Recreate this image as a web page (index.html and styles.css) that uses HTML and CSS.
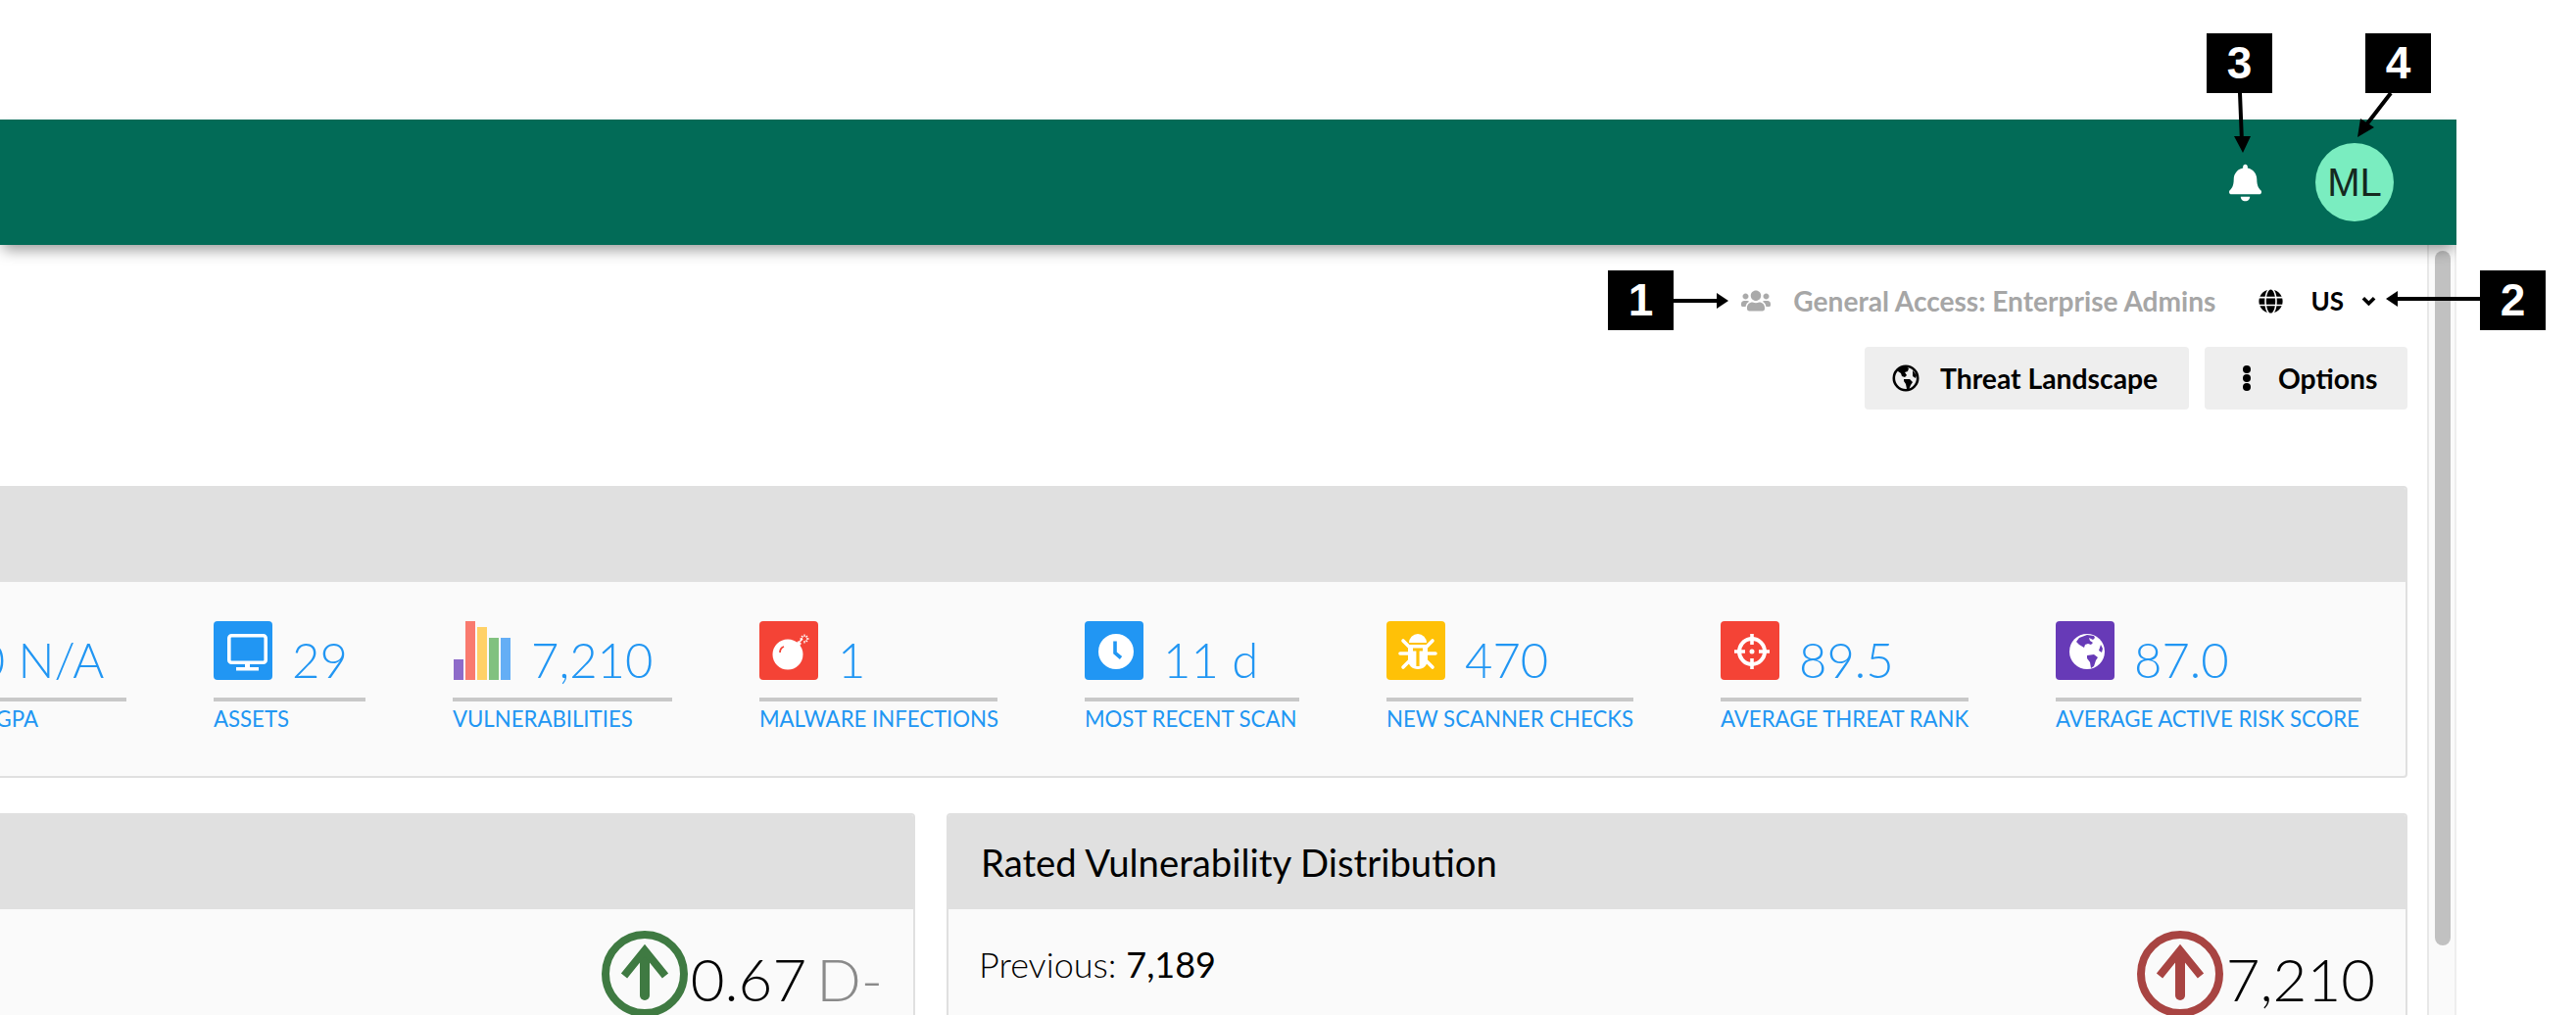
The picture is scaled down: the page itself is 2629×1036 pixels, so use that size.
FILE: index.html
```html
<!DOCTYPE html>
<html lang="en">
<head>
<meta charset="utf-8">
<title>Dashboard</title>
<link rel="stylesheet" href="styles.css">
</head>
<body>
<div class="app">
  <div class="topspace"></div>
  <header class="bar">
    <svg class="bell" viewBox="0 0 448 512"><path fill="#fff" d="M224 512c35.32 0 63.97-28.65 63.97-64H160.03c0 35.35 28.65 64 63.97 64zm215.39-149.71c-19.32-20.76-55.47-51.99-55.47-154.29 0-77.7-54.48-139.9-127.94-155.16V32c0-17.67-14.32-32-31.98-32s-31.98 14.33-31.98 32v20.84C118.56 68.1 64.08 130.3 64.08 208c0 102.3-36.15 133.53-55.47 154.29-6 6.45-8.66 14.16-8.61 21.71.11 16.4 12.98 32 32.1 32h383.8c19.12 0 32-15.6 32.1-32 .05-7.55-2.61-15.27-8.61-21.71z"/></svg>
    <div class="avatar">ML</div>
  </header>
  <div class="main">
    <div class="content">
      <div class="access">
        <svg class="users" viewBox="0 0 640 512"><path fill="#aaa" d="M96 224c35.3 0 64-28.7 64-64s-28.7-64-64-64-64 28.7-64 64 28.7 64 64 64zm448 0c35.3 0 64-28.7 64-64s-28.7-64-64-64-64 28.7-64 64 28.7 64 64 64zm32 32h-64c-17.6 0-33.5 7.1-45.1 18.6 40.3 22.1 68.9 62 75.1 109.4h66c17.7 0 32-14.3 32-32v-32c0-35.3-28.7-64-64-64zm-256 0c61.9 0 112-50.1 112-112S381.9 32 320 32 208 82.1 208 144s50.1 112 112 112zm76.8 32h-8.3c-20.8 10-43.9 16-68.5 16s-47.6-6-68.5-16h-8.3C179.6 288 128 339.6 128 403.2V432c0 26.5 21.5 48 48 48h288c26.5 0 48-21.5 48-48v-28.8c0-63.6-51.6-115.2-115.2-115.2zm-223.7-13.4C161.5 263.1 145.6 256 128 256H64c-35.3 0-64 28.7-64 64v32c0 17.7 14.3 32 32 32h65.9c6.3-47.4 34.9-87.3 75.2-109.4z"/></svg>
        <span class="access-text">General Access: Enterprise Admins</span>
        <svg class="globe" viewBox="0 0 496 512"><path d="M336.5 160C322 70.7 287.8 8 248 8s-74 62.7-88.5 152h177zM152 256c0 22.2 1.2 43.5 3.3 64h185.3c2.1-20.5 3.3-41.8 3.3-64s-1.2-43.5-3.3-64H155.3c-2.1 20.5-3.3 41.8-3.3 64zm324.7-96c-28.6-67.9-86.5-120.4-158-141.6 24.4 33.8 41.2 84.7 50 141.6h108zM177.2 18.4C105.8 39.6 47.8 92.1 19.3 160h108c8.7-56.9 25.5-107.8 49.9-141.6zM487.4 192H372.7c2.1 21 3.3 42.5 3.3 64s-1.2 43-3.3 64h114.6c5.5-20.5 8.6-41.8 8.6-64s-3.1-43.5-8.5-64zM120 256c0-21.5 1.2-43 3.3-64H8.6C3.2 212.5 0 233.8 0 256s3.2 43.5 8.6 64h114.6c-2-21-3.2-42.5-3.2-64zm39.5 96c14.5 89.3 48.7 152 88.5 152s74-62.7 88.5-152h-177zm159.3 141.6c71.4-21.2 129.4-73.7 158-141.6h-108c-8.8 56.9-25.6 107.8-50 141.6zM19.3 352c28.6 67.9 86.5 120.4 158 141.6-24.4-33.8-41.2-84.7-50-141.6h-108z"/></svg>
        <span class="region">US</span>
        <svg class="chev" viewBox="0 0 16 10"><path d="M2 2l6 6 6-6" fill="none" stroke="#000" stroke-width="3.8"/></svg>
      </div>
      <div class="actions">
        <button class="btn btn-threat">
          <svg class="btn-earth" viewBox="0 0 28 28"><circle cx="14" cy="14" r="12.2" fill="#eee" stroke="#000" stroke-width="2.6"/><path d="M8 3l6-1 3 2-1 3-3 1 2 3-2 2-3-1-1-3-3-2-1-1zM12 15l6 0 3 3-2 3-2 5-2-1-1-5-2-3zM21 6l4 5-1 3-3-2z"/></svg>
          <span>Threat Landscape</span>
        </button>
        <button class="btn btn-options">
          <svg class="dots" viewBox="0 0 10 26"><circle cx="5" cy="4" r="4"/><circle cx="5" cy="13" r="4"/><circle cx="5" cy="22" r="4"/></svg>
          <span>Options</span>
        </button>
      </div>
      <section class="panel">
        <div class="panel-head"></div>
        <div class="stats">
          <div class="stat stat-gpa">
            <div class="stat-top">
              <div class="ico ico-green"></div>
              <span class="num">0.0 N/A</span>
            </div>
            <div class="stat-label">ENTERPRISE GPA</div>
          </div>
          <div class="stat stat-assets">
            <div class="stat-top">
              <svg class="ico ico-blue" viewBox="0 0 60 60"><rect x="15.8" y="14.8" width="37.4" height="27.4" rx="2.5" fill="none" stroke="#fff" stroke-width="3.6"/><path fill="#fff" d="M32 44h5v3h9v3.5H23V47h9z"/></svg>
              <span class="num">29</span>
            </div>
            <div class="stat-label">ASSETS</div>
          </div>
          <div class="stat stat-vuln">
            <div class="stat-top">
              <div class="bars">
                <i class="b b1"></i><i class="b b2"></i><i class="b b3"></i><i class="b b4"></i><i class="b b5"></i>
              </div>
              <span class="num">7,210</span>
            </div>
            <div class="stat-label">VULNERABILITIES</div>
          </div>
          <div class="stat stat-malware">
            <div class="stat-top">
              <svg class="ico ico-red" viewBox="0 0 60 60"><circle cx="29" cy="34" r="15.5" fill="#fff"/><path d="M37 23l3-3 3 3-3 3z" fill="#fff"/><path d="M41 21l3-3" stroke="#fff" stroke-width="1.6"/><path d="M46 13.500v2.500M46 20v2.500M41.500 18h2.500M48 18h2.500M43 15l1.500 1.500M49 15l-1.500 1.500M49 21l-1.500-1.500" stroke="#fff" stroke-width="1.3"/><path d="M21 32c0-3 1.500-5 4-6" fill="none" stroke="#f44336" stroke-width="1.800"/></svg>
              <span class="num">1</span>
            </div>
            <div class="stat-label">MALWARE INFECTIONS</div>
          </div>
          <div class="stat stat-scan">
            <div class="stat-top">
              <svg class="ico ico-blue" viewBox="0 0 60 60"><circle cx="32" cy="31" r="18" fill="#fff"/><path d="M31 20.500V32.500l6 5" fill="none" stroke="#2196f3" stroke-width="3.600"/></svg>
              <span class="num">11 d</span>
            </div>
            <div class="stat-label">MOST RECENT SCAN</div>
          </div>
          <div class="stat stat-checks">
            <div class="stat-top">
              <svg class="ico ico-amber" viewBox="0 0 60 60"><path fill="#fff" d="M23 22a9 9 0 0 1 18 0z"/><path fill="#fff" d="M22 24h20v15c0 6-4 10-10 10s-10-4-10-10z"/><path d="M32 28v18M27 29h10" stroke="#ffc107" stroke-width="3.200" fill="none"/><path d="M17 20l6 6M47 20l-6 6M14 33h9M50 33h-9M17 47l6-6M47 47l-6-6" stroke="#fff" stroke-width="3.600" stroke-linecap="round"/></svg>
              <span class="num">470</span>
            </div>
            <div class="stat-label">NEW SCANNER CHECKS</div>
          </div>
          <div class="stat stat-rank">
            <div class="stat-top">
              <svg class="ico ico-red" viewBox="0 0 60 60"><circle cx="32" cy="31" r="13" fill="none" stroke="#fff" stroke-width="4"/><circle cx="32" cy="31" r="2.500" fill="#fff"/><path d="M32 13v11M32 38v11M14 31h11M39 31h11" stroke="#fff" stroke-width="3.600"/></svg>
              <span class="num">89.5</span>
            </div>
            <div class="stat-label">AVERAGE THREAT RANK</div>
          </div>
          <div class="stat stat-risk">
            <div class="stat-top">
              <svg class="ico ico-purple" viewBox="0 0 60 60"><circle cx="32" cy="31" r="18" fill="#fff"/><path fill="#673ab7" d="M24 17l8-3 7 1 1 2-2 2-4-2 1 3 3 2-2 2-3-1-3 1-1 3-5-3-3-3zM32 35l7-1 4 3-2 3-2 6-3 2-1-6-3-4zM46 24l2 4-1 4-3-2z"/></svg>
              <span class="num">87.0</span>
            </div>
            <div class="stat-label">AVERAGE ACTIVE RISK SCORE</div>
          </div>
        </div>
      </section>
      <div class="row">
        <section class="panel">
          <div class="panel-head"></div>
          <div class="panel-body panel-body-end">
            <div class="metric">
              <svg class="trend trend-up" viewBox="0 0 88 88"><circle cx="44" cy="44" r="40" fill="none" stroke="#3f7a42" stroke-width="8"/><path d="M44 28v38" stroke="#3f7a42" stroke-width="10" stroke-linecap="round"/><path d="M23 46l21-26 21 26" fill="none" stroke="#3f7a42" stroke-width="8"/></svg>
              <span class="metric-val">0.67</span>
              <span class="grade">D-</span>
            </div>
          </div>
        </section>
        <section class="panel">
          <div class="panel-head"><h2 class="panel-title">Rated Vulnerability Distribution</h2></div>
          <div class="panel-body">
            <div class="prev">Previous: <b>7,189</b></div>
            <div class="metric">
              <svg class="trend trend-down" viewBox="0 0 88 88"><circle cx="44" cy="44" r="40" fill="none" stroke="#a84442" stroke-width="8"/><path d="M44 28v38" stroke="#a84442" stroke-width="10" stroke-linecap="round"/><path d="M23 46l21-26 21 26" fill="none" stroke="#a84442" stroke-width="8"/></svg>
              <span class="metric-val">7,210</span>
            </div>
          </div>
        </section>
      </div>
    </div>
    <div class="track"><div class="thumb"></div></div>
  </div>
</div>
<svg class="arrows" viewBox="0 0 2629 1036">
  <path d="M1708 307H1754M2531 305H2445M2286 95L2288 145M2440 95L2413 130" stroke="#000" stroke-width="4" fill="none"/>
  <path d="M1764 307l-12-8v16zM2435 305l12-8v16zM2289 156l-9-17h17zM2406 140l3-19 14 9z"/>
</svg>
<div class="tag tag1">1</div>
<div class="tag tag2">2</div>
<div class="tag tag3">3</div>
<div class="tag tag4">4</div>
</body>
</html>
```
FILE: styles.css
```css
* { box-sizing: border-box; }
html, body { margin: 0; height: 100%; overflow: hidden; background: #fff; }
body { font-family: "Lato", "Noto Sans", sans-serif; color: #000; position: relative; }
.app { width: 2507px; height: 1036px; display: flex; flex-direction: column; overflow: hidden; }
.topspace { height: 122px; flex: none; }
.bar { height: 128px; flex: none; background: #026b57; display: flex; align-items: center; justify-content: flex-end; padding-right: 64px; gap: 55px; box-shadow: 0 8px 14px -3px rgba(0,0,0,.4); position: relative; z-index: 2; }
.bell { width: 33px; height: 39px; }
.avatar { width: 80px; height: 80px; border-radius: 50%; background: #7aedc0; color: #15291f; font: 40px/80px "Liberation Sans", sans-serif; text-align: center; }
.main { flex: 1; display: flex; min-height: 0; overflow: hidden; }
.content { flex: 1; margin-left: -557px; padding: 37px 20px 0 0; min-width: 0; }
.access { height: 40px; display: flex; align-items: center; justify-content: flex-end; padding-right: 32px; }
.users { width: 30px; height: 24px; margin-right: 23px; }
.access-text { font-size: 28.1px; font-weight: 700; color: #a6a6a6; margin-right: 44px; }
.globe { width: 25px; height: 25px; margin-right: 28px; }
.region { font-size: 26px; font-weight: 700; margin-right: 18px; }
.chev { width: 15px; height: 10px; }
.actions { display: flex; justify-content: flex-end; gap: 16px; margin-top: 27px; }
.btn { height: 64px; border: 0; border-radius: 4px; background: #eee; display: flex; align-items: center; font: 700 28.3px "Lato", sans-serif; color: #000; padding: 0; }
.btn-threat { width: 331px; padding-left: 28px; gap: 21px; }
.btn-earth { width: 28px; height: 28px; }
.btn-options { width: 207px; padding-left: 38px; gap: 27px; }
.dots { width: 10px; height: 26px; }
.panel { background: #fafafa; border: 2px solid #e0e0e0; border-radius: 4px; overflow: hidden; }
.panel > .panel-head { background: #e0e0e0; height: 96px; display: flex; align-items: center; }
.content > .panel { margin-top: 78px; height: 298px; }
.panel-title { margin: 0; padding-left: 33px; font-size: 38.3px; font-weight: 400; }
.stats { display: flex; justify-content: flex-end; gap: 89px; padding: 40px 45px 0 0; }
.stat { flex: none; }
.stat-gpa { width: 272px; }
.stat-gpa .stat-label { margin-left: 5px; }
.stat-assets { width: 155px; }
.stat-vuln { width: 224px; }
.stat-malware { width: 243px; }
.stat-scan { width: 219px; }
.stat-checks { width: 252px; }
.stat-rank { width: 253px; }
.stat-risk { width: 312px; }
.stat-top { display: flex; align-items: flex-end; gap: 20px; height: 82px; border-bottom: 4px solid #c8c8c8; padding-bottom: 18px; }
.ico { width: 60px; height: 60px; border-radius: 4px; flex: none; display: block; }
.ico-blue { background: #2196f3; }
.ico-red { background: #f44336; }
.ico-amber { background: #ffc107; }
.ico-purple { background: #673ab7; }
.ico-green { background: #4caf50; }
.num { font-size: 49px; line-height: 42px; font-weight: 300; color: #2196f3; white-space: nowrap; }
.stat-label { font-size: 22.2px; line-height: 30px; margin-top: 3px; color: #2196f3; white-space: nowrap; }
.bars { width: 60px; height: 60px; flex: none; display: flex; align-items: flex-end; gap: 2px; padding-left: 1px; }
.b { width: 10px; display: block; }
.b1 { height: 21px; background: #8e6bc9; }
.b2 { height: 60px; background: #f97a6e; }
.b3 { height: 54px; background: #ffd166; }
.b4 { height: 43px; background: #81c17f; }
.b5 { height: 43px; background: #64aef5; }
.row { display: grid; grid-template-columns: 1491px 1491px; gap: 32px; margin-top: 36px; }
.row > .panel { height: 300px; }
.panel-body { display: flex; justify-content: space-between; padding: 22px 31px 0 31px; }
.panel-body-end { justify-content: flex-end; padding-right: 31px; }
.prev { font-size: 36px; line-height: 44px; font-weight: 300; margin-top: 12px; }
.prev b { font-weight: 400; }
.metric { display: flex; align-items: flex-start; }
.trend { width: 88px; height: 88px; flex: none; margin-right: 3px; }
.metric-val { font-size: 60px; font-weight: 300; line-height: 88px; margin-top: 5px; }
.grade { font-size: 60px; font-weight: 300; line-height: 88px; margin-top: 5px; margin-left: 10px; color: #8a8a8a; }
.track { width: 30px; flex: none; background: #fafafa; border-left: 2px solid #e8e8e8; border-right: 2px solid #eee; padding: 6px 4px 0 6px; height: 786px; }
.thumb { height: 709px; background: #c1c1c1; border-radius: 8px; }
.arrows { position: absolute; left: 0; top: 0; width: 2629px; height: 1036px; z-index: 3; pointer-events: none; }
.tag { position: absolute; width: 67px; height: 61px; background: #000; color: #fff; font: 700 46px/61px "Liberation Sans", sans-serif; text-align: center; z-index: 4; }
.tag1 { left: 1641px; top: 276px; }
.tag2 { left: 2531px; top: 276px; }
.tag3 { left: 2252px; top: 34px; }
.tag4 { left: 2414px; top: 34px; }
```
